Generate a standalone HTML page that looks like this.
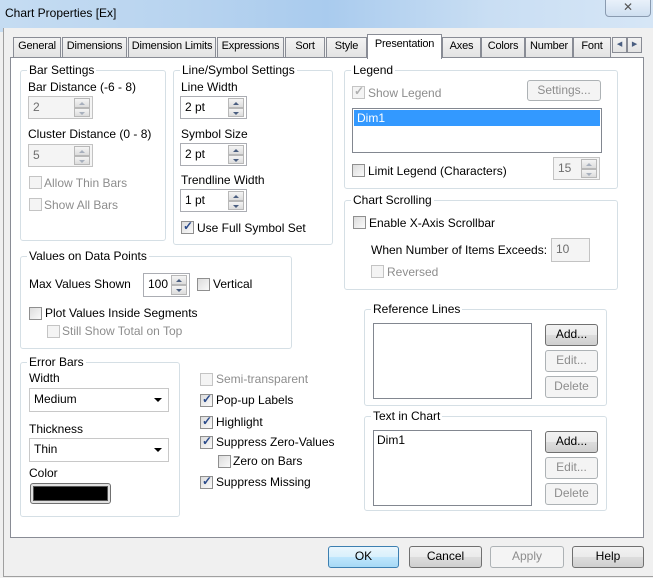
<!DOCTYPE html>
<html><head><style>
*{box-sizing:border-box;margin:0;padding:0}
body{width:653px;height:578px;overflow:hidden;background:#f0f0f0;font-family:"Liberation Sans",sans-serif;font-size:12px;color:#000;position:relative}
.a{position:absolute;white-space:nowrap}
.t{position:absolute;white-space:nowrap;line-height:14px}
.dis{color:#8d8d8d}
.grp{position:absolute;border:1px solid #d5dfe5;border-radius:3px}
.lg{position:absolute;top:-8px;left:6px;background:#fff;padding:0 2px;line-height:14px}
.edit{position:absolute;border:1px solid #abadb3;background:#fff;padding:3px 4px;line-height:14px}
.edit.d{background:#f4f4f4;color:#6d6d6d;border-color:#c3c3c3}
.spin{position:absolute;right:2px;width:16px;top:1px;bottom:1px}
.spin i{display:block;height:50%;border:1px solid #b8b8b8;background:linear-gradient(#f4f4f4,#dcdcdc);position:relative}
.spin i:after{content:"";position:absolute;left:4px;top:3px;border-left:3px solid transparent;border-right:3px solid transparent}
.spin i.u:after{border-bottom:3px solid #4a5e80}
.spin i.dn:after{border-top:3px solid #4a5e80}
.d .spin i:after{opacity:.4}
.cb{position:absolute;width:13px;height:13px;border:1px solid #8f8f8f;background:linear-gradient(135deg,#dcdcdc,#fafafa)}
.cb.ck:after{content:"✓";position:absolute;left:1px;top:-3px;font-size:12px;font-weight:bold;color:#2a4a8a}
.cb.d{border-color:#c4c4c4;background:#f4f4f4}
.cb.d.ck:after{color:#b0b0b0}
.btn{position:absolute;border:1px solid #707070;border-radius:3px;background:linear-gradient(#f2f2f2 0,#ebebeb 50%,#dddddd 51%,#cfcfcf);text-align:center;line-height:19px}
.btn.d{border-color:#adb2b5;background:#f4f4f4;color:#8d8d8d}
.lst{position:absolute;border:1px solid #828790;background:#fff}
.tab{position:absolute;top:37px;height:20px;border:1px solid #898c95;border-bottom:none;background:linear-gradient(#f3f3f3,#e3e3e3);text-align:center;line-height:17px;white-space:nowrap;overflow:hidden;font-size:11px;letter-spacing:-0.2px}
.combo{position:absolute;border:1px solid #c8c8c8;background:#fff;padding:3px 4px;line-height:14px}
.combo:after{content:"";position:absolute;right:6px;top:9px;border-left:4px solid transparent;border-right:4px solid transparent;border-top:4px solid #000}
</style></head><body>
<div class="a" style="left:0;top:0;width:653px;height:32px;background:linear-gradient(90deg,#c5dcf2 0%,#b7d3ef 30%,#a9cbee 50%,#c9def3 75%,#d6e6f6 100%)"></div>
<div class="t" style="left:5px;top:6px">Chart Properties [Ex]</div>
<div class="a" style="left:605px;top:-2px;width:46px;height:19px;border:1px solid #8a9bb0;border-radius:0 0 4px 4px;background:linear-gradient(#eaf2fb,#cfdff0);text-align:center;font-size:12px;color:#555;line-height:17px">✕</div>
<div class="a" style="left:3px;top:28px;width:650px;height:549px;background:#f0f0f0;border-left:1px solid #a0a0a0;border-bottom:1px solid #a0a0a0"></div>

<div class="tab" style="left:13px;width:48px">General</div>
<div class="tab" style="left:62px;width:65px">Dimensions</div>
<div class="tab" style="left:128px;width:88px">Dimension Limits</div>
<div class="tab" style="left:217px;width:67px">Expressions</div>
<div class="tab" style="left:285px;width:40px">Sort</div>
<div class="tab" style="left:326px;width:41px">Style</div>
<div class="tab" style="left:442px;width:39px">Axes</div>
<div class="tab" style="left:481px;width:44px">Colors</div>
<div class="tab" style="left:525px;width:48px">Number</div>
<div class="tab" style="left:573px;width:38px">Font</div>
<div class="tab" style="left:612px;width:15px;top:37px;height:16px;border-bottom:1px solid #898c95;font-size:7px;color:#4a5e80;line-height:14px">◀</div>
<div class="tab" style="left:627px;width:15px;top:37px;height:16px;border-bottom:1px solid #898c95;font-size:7px;color:#4a5e80;line-height:14px">▶</div>

<div class="a" style="left:10px;top:57px;width:634px;height:481px;background:#fff;border:1px solid #898c95"></div>
<div class="tab" style="left:367px;top:34px;width:75px;height:25px;background:#fff;z-index:2;line-height:19px">Presentation</div>

<!-- Bar settings -->
<div class="grp" style="left:20px;top:70px;width:146px;height:171px"><span class="lg">Bar Settings</span></div>
<div class="t" style="left:28px;top:80px">Bar Distance (-6 - 8)</div>
<div class="edit d" style="left:28px;top:96px;width:65px;height:23px">2<div class="spin"><i class="u"></i><i class="dn"></i></div></div>
<div class="t" style="left:28px;top:127px">Cluster Distance (0 - 8)</div>
<div class="edit d" style="left:28px;top:144px;width:65px;height:23px">5<div class="spin"><i class="u"></i><i class="dn"></i></div></div>
<div class="cb d" style="left:29px;top:176px"></div><div class="t dis" style="left:44px;top:176px">Allow Thin Bars</div>
<div class="cb d" style="left:29px;top:198px"></div><div class="t dis" style="left:44px;top:198px">Show All Bars</div>

<!-- Line/Symbol -->
<div class="grp" style="left:173px;top:70px;width:160px;height:175px"><span class="lg">Line/Symbol Settings</span></div>
<div class="t" style="left:181px;top:80px">Line Width</div>
<div class="edit" style="left:180px;top:96px;width:67px;height:23px">2 pt<div class="spin"><i class="u"></i><i class="dn"></i></div></div>
<div class="t" style="left:181px;top:127px">Symbol Size</div>
<div class="edit" style="left:180px;top:143px;width:67px;height:23px">2 pt<div class="spin"><i class="u"></i><i class="dn"></i></div></div>
<div class="t" style="left:181px;top:173px">Trendline Width</div>
<div class="edit" style="left:180px;top:189px;width:67px;height:23px">1 pt<div class="spin"><i class="u"></i><i class="dn"></i></div></div>
<div class="cb ck" style="left:181px;top:221px"></div><div class="t" style="left:197px;top:221px">Use Full Symbol Set</div>

<!-- Values on data points -->
<div class="grp" style="left:20px;top:256px;width:272px;height:93px"><span class="lg">Values on Data Points</span></div>
<div class="t" style="left:29px;top:277px">Max Values Shown</div>
<div class="edit" style="left:143px;top:273px;width:47px;height:24px">100<div class="spin"><i class="u"></i><i class="dn"></i></div></div>
<div class="cb" style="left:197px;top:278px"></div><div class="t" style="left:213px;top:277px">Vertical</div>
<div class="cb" style="left:29px;top:307px"></div><div class="t" style="left:45px;top:306px">Plot Values Inside Segments</div>
<div class="cb d" style="left:47px;top:325px"></div><div class="t dis" style="left:62px;top:324px">Still Show Total on Top</div>

<!-- Error bars -->
<div class="grp" style="left:20px;top:362px;width:160px;height:155px"><span class="lg">Error Bars</span></div>
<div class="t" style="left:29px;top:371px">Width</div>
<div class="combo" style="left:29px;top:388px;width:140px;height:24px">Medium</div>
<div class="t" style="left:29px;top:422px">Thickness</div>
<div class="combo" style="left:29px;top:438px;width:140px;height:24px">Thin</div>
<div class="t" style="left:29px;top:466px">Color</div>
<div class="a" style="left:30px;top:483px;width:81px;height:21px;border:1px solid #707070;border-radius:3px;background:#e0e0e0;padding:2px"><div style="width:100%;height:100%;background:#000;border:1px solid #555"></div></div>

<!-- checkbox column -->
<div class="cb d" style="left:200px;top:373px"></div><div class="t dis" style="left:216px;top:372px">Semi-transparent</div>
<div class="cb ck" style="left:200px;top:394px"></div><div class="t" style="left:216px;top:393px">Pop-up Labels</div>
<div class="cb ck" style="left:200px;top:416px"></div><div class="t" style="left:216px;top:415px">Highlight</div>
<div class="cb ck" style="left:200px;top:436px"></div><div class="t" style="left:216px;top:435px">Suppress Zero-Values</div>
<div class="cb" style="left:218px;top:455px"></div><div class="t" style="left:233px;top:454px">Zero on Bars</div>
<div class="cb ck" style="left:200px;top:476px"></div><div class="t" style="left:216px;top:475px">Suppress Missing</div>

<!-- Legend -->
<div class="grp" style="left:344px;top:70px;width:274px;height:119px"><span class="lg">Legend</span></div>
<div class="cb d ck" style="left:352px;top:86px"></div><div class="t dis" style="left:368px;top:86px">Show Legend</div>
<div class="btn d" style="left:527px;top:80px;width:74px;height:21px">Settings...</div>
<div class="lst" style="left:352px;top:108px;width:250px;height:45px"><div style="background:#3399ff;color:#fff;height:16px;margin:1px;padding-left:3px;line-height:16px">Dim1</div></div>
<div class="cb" style="left:352px;top:164px"></div><div class="t" style="left:368px;top:164px">Limit Legend (Characters)</div>
<div class="edit d" style="left:553px;top:157px;width:47px;height:23px">15<div class="spin"><i class="u"></i><i class="dn"></i></div></div>

<!-- Chart scrolling -->
<div class="grp" style="left:344px;top:200px;width:274px;height:90px"><span class="lg">Chart Scrolling</span></div>
<div class="cb" style="left:353px;top:216px"></div><div class="t" style="left:369px;top:216px">Enable X-Axis Scrollbar</div>
<div class="t" style="left:371px;top:243px">When Number of Items Exceeds:</div>
<div class="edit d" style="left:551px;top:238px;width:39px;height:24px">10</div>
<div class="cb d" style="left:371px;top:265px"></div><div class="t dis" style="left:387px;top:265px">Reversed</div>

<!-- Reference lines -->
<div class="grp" style="left:364px;top:309px;width:243px;height:97px"><span class="lg">Reference Lines</span></div>
<div class="lst" style="left:373px;top:323px;width:159px;height:76px"></div>
<div class="btn" style="left:545px;top:324px;width:53px;height:22px">Add...</div>
<div class="btn d" style="left:545px;top:350px;width:53px;height:22px">Edit...</div>
<div class="btn d" style="left:545px;top:376px;width:53px;height:22px">Delete</div>

<!-- Text in chart -->
<div class="grp" style="left:364px;top:416px;width:243px;height:95px"><span class="lg">Text in Chart</span></div>
<div class="lst" style="left:373px;top:430px;width:159px;height:76px"><div style="padding:2px 3px;line-height:14px">Dim1</div></div>
<div class="btn" style="left:545px;top:431px;width:53px;height:22px">Add...</div>
<div class="btn d" style="left:545px;top:457px;width:53px;height:22px">Edit...</div>
<div class="btn d" style="left:545px;top:483px;width:53px;height:22px">Delete</div>

<!-- bottom buttons -->
<div class="btn" style="left:328px;top:546px;width:71px;height:22px;border-color:#3c7fb1;background:linear-gradient(#eaf6fd,#d9f0fc 50%,#bee6fd 51%,#a7d9f5)">OK</div>
<div class="btn" style="left:409px;top:546px;width:73px;height:22px">Cancel</div>
<div class="btn d" style="left:490px;top:546px;width:74px;height:22px">Apply</div>
<div class="btn" style="left:572px;top:546px;width:72px;height:22px">Help</div>
</body></html>
